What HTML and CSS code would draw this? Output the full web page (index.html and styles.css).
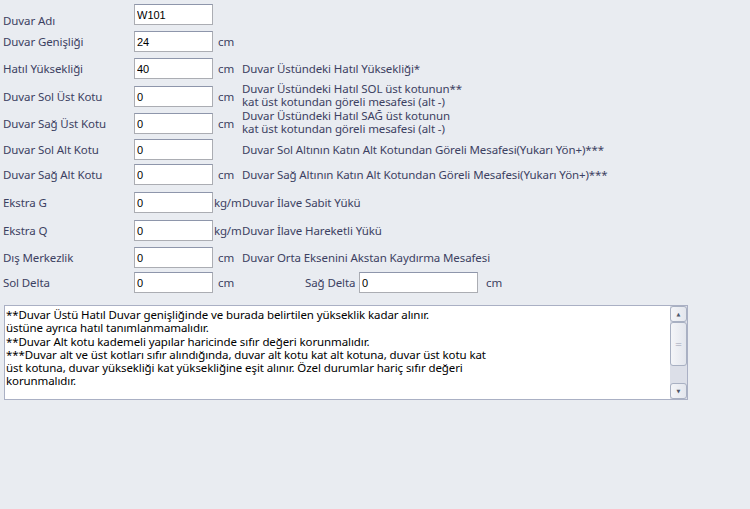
FILE: index.html
```html
<!DOCTYPE html>
<html lang="tr">
<head>
  <meta charset="UTF-8">
  <title>Duvar</title>
  <link rel="stylesheet" href="styles.css">
</head>
<body>

<div class="form">
  <div class="row r27 first">
    <span class="label">Duvar Adı</span>
    <input type="text" class="box" value="W101">
  </div>
  <div class="row r27">
    <span class="label">Duvar Genişliği</span>
    <input type="text" class="box" value="24">
    <span class="unit">cm</span>
  </div>
  <div class="row r28">
    <span class="label">Hatıl Yüksekliği</span>
    <input type="text" class="box" value="40">
    <span class="unit">cm</span>
    <span class="desc">Duvar Üstündeki Hatıl Yüksekliği*</span>
  </div>
  <div class="row r27">
    <span class="label">Duvar Sol Üst Kotu</span>
    <input type="text" class="box" value="0">
    <span class="unit">cm</span>
    <span class="desc two">Duvar Üstündeki Hatıl SOL üst kotunun**<br>kat üst kotundan göreli mesafesi (alt -)</span>
  </div>
  <div class="row r26">
    <span class="label">Duvar Sağ Üst Kotu</span>
    <input type="text" class="box" value="0">
    <span class="unit">cm</span>
    <span class="desc two">Duvar Üstündeki Hatıl SAĞ üst kotunun<br>kat üst kotundan göreli mesafesi (alt -)</span>
  </div>
  <div class="row r25">
    <span class="label">Duvar Sol Alt Kotu</span>
    <input type="text" class="box" value="0">
    <span class="unit"></span>
    <span class="desc">Duvar Sol Altının Katın Alt Kotundan Göreli Mesafesi(Yukarı Yön+)***</span>
  </div>
  <div class="row r28">
    <span class="label">Duvar Sağ Alt Kotu</span>
    <input type="text" class="box" value="0">
    <span class="unit">cm</span>
    <span class="desc">Duvar Sağ Altının Katın Alt Kotundan Göreli Mesafesi(Yukarı Yön+)***</span>
  </div>
  <div class="row r28">
    <span class="label">Ekstra G</span>
    <input type="text" class="box" value="0">
    <span class="unit kg">kg/m</span>
    <span class="desc">Duvar İlave Sabit Yükü</span>
  </div>
  <div class="row r27">
    <span class="label">Ekstra Q</span>
    <input type="text" class="box" value="0">
    <span class="unit kg">kg/m</span>
    <span class="desc">Duvar İlave Hareketli Yükü</span>
  </div>
  <div class="row r25">
    <span class="label">Dış Merkezlik</span>
    <input type="text" class="box" value="0">
    <span class="unit">cm</span>
    <span class="desc">Duvar Orta Eksenini Akstan Kaydırma Mesafesi</span>
  </div>
  <div class="row r21">
    <span class="label">Sol Delta</span>
    <input type="text" class="box" value="0">
    <span class="unit">cm</span>
    <span class="label-right">Sağ Delta</span>
    <input type="text" class="box wide" value="0">
    <span class="unit-right">cm</span>
  </div>
</div>

<div class="notes">
  <div class="notes-text">**Duvar Üstü Hatıl Duvar genişliğinde ve burada belirtilen yükseklik kadar alınır.<br>
üstüne ayrıca hatıl tanımlanmamalıdır.<br>
**Duvar Alt kotu kademeli yapılar haricinde sıfır değeri korunmalıdır.<br>
***Duvar alt ve üst kotları sıfır alındığında, duvar alt kotu kat alt kotuna, duvar üst kotu kat<br>
üst kotuna, duvar yüksekliği kat yüksekliğine eşit alınır. Özel durumlar hariç sıfır değeri<br>
korunmalıdır.</div>
  <div class="scrollbar">
    <div class="sb-btn">&#9650;</div>
    <div class="sb-thumb">=</div>
    <div class="sb-track"></div>
    <div class="sb-btn">&#9660;</div>
  </div>
</div>

</body>
</html>
```

FILE: styles.css
```css
body {
  margin: 0;
  background-color: #e9ecf1;
  font-family: "Noto Sans", sans-serif;
  font-size: 11.5px;
  letter-spacing: -0.1px;
  color: #3c4162;
  width: 750px;
  height: 509px;
  overflow: hidden;
}

.form {
  padding: 4px 0 0 3px;
}

.row {
  display: flex;
  align-items: center;
  height: 21px;
}

.r21 { margin-bottom: 0; }
.r25 { margin-bottom: 4px; }
.r26 { margin-bottom: 5px; }
.r27 { margin-bottom: 6px; }
.r28 { margin-bottom: 7px; }

.label {
  width: 131px;
  flex-shrink: 0;
  white-space: nowrap;
}

.first .label {
  position: relative;
  top: 6px;
}

.box {
  box-sizing: border-box;
  width: 79px;
  height: 21px;
  margin: 0;
  padding: 0 2px;
  border: 1px solid #abadb3;
  border-top-color: #8e96ab;
  background: #fff;
  font-family: "Liberation Sans", Arial, sans-serif;
  font-size: 11px;
  letter-spacing: 0;
  color: #000;
  outline: none;
}

.box.wide {
  width: 119px;
}

.unit {
  width: 24px;
  margin-left: 5px;
  overflow: hidden;
  white-space: nowrap;
  flex-shrink: 0;
}

.unit.kg {
  width: 28px;
  margin-left: 1px;
  letter-spacing: -0.2px;
}

.desc {
  white-space: nowrap;
}

.desc.two {
  line-height: 12.5px;
  position: relative;
  top: -1px;
}

.label-right {
  margin-left: 63px;
  width: 54px;
  white-space: nowrap;
}

.unit-right {
  margin-left: 8px;
}

.notes {
  display: flex;
  box-sizing: border-box;
  width: 684px;
  height: 95px;
  margin: 12px 0 0 4px;
  border: 1px solid #aab0c4;
  background: #fff;
}

.notes-text {
  flex: 1;
  padding: 2px 0 0 1px;
  color: #000;
  line-height: 13.3px;
  white-space: nowrap;
  overflow: hidden;
}

.scrollbar {
  width: 17px;
  display: flex;
  flex-direction: column;
  background: #dcdfe8;
}

.sb-btn,
.sb-thumb {
  box-sizing: border-box;
  border: 1px solid #a8b0c2;
  border-radius: 3px;
  background: linear-gradient(to right, #f4f5f8, #e3e6ed);
  color: #4d5669;
  text-align: center;
  font-family: "DejaVu Sans", sans-serif;
  letter-spacing: 0;
}

.sb-btn {
  height: 16px;
  font-size: 5px;
  line-height: 14px;
}

.sb-thumb {
  height: 44px;
  font-size: 9px;
  line-height: 42px;
  color: #9aa2b4;
}

.sb-track {
  flex: 1;
}
```
